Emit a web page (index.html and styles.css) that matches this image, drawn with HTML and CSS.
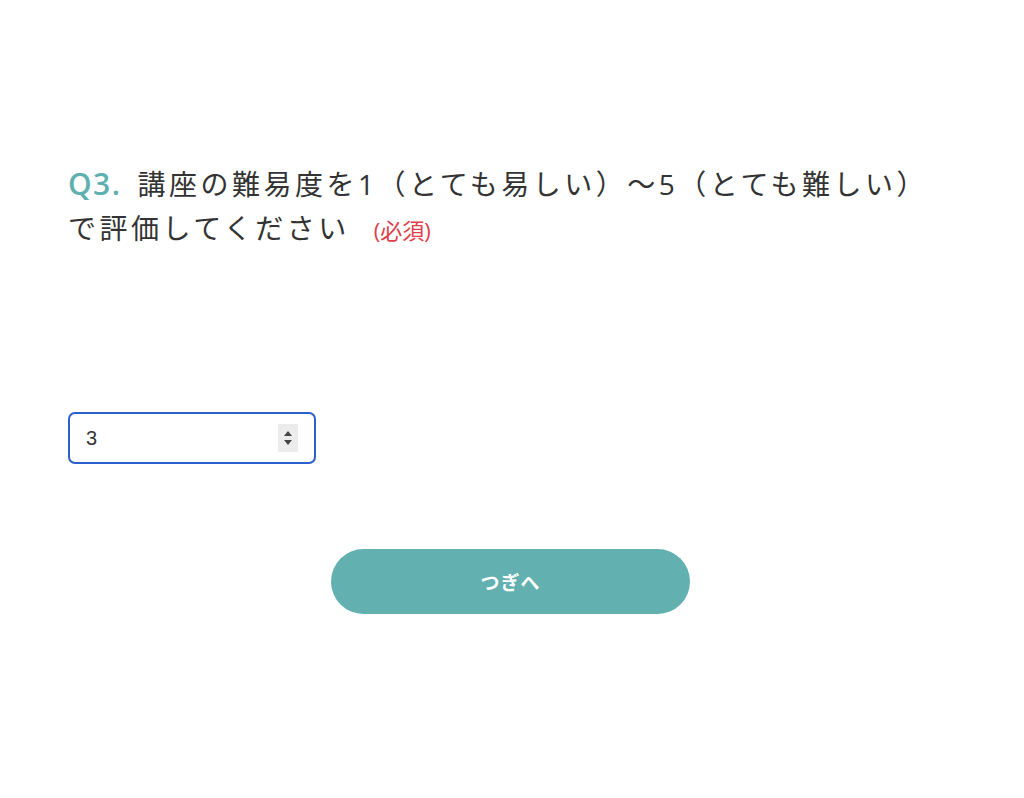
FILE: index.html
```html
<!DOCTYPE html>
<html lang="ja">
<head>
<meta charset="utf-8">
<link rel="stylesheet" href="styles.css">
</head>
<body>
<main class="page">
  <h2 class="question"><span class="qnum">Q3.</span><span class="qtext">講座の難易度を1（とても易しい）〜5（とても難しい）で評価してください</span><span class="req">(必須)</span></h2>
  <div class="field">
    <input class="num" type="number" value="3" autofocus>
    <span class="spin" aria-hidden="true">
      <svg width="20" height="28" viewBox="0 0 20 28"><rect width="20" height="28" fill="#ececec"/><path d="M6 12 L10 7 L14 12 Z" fill="#444"/><path d="M6 16 L10 21 L14 16 Z" fill="#444"/></svg>
    </span>
  </div>
  <div class="actions">
    <button class="next" type="button">つぎへ</button>
  </div>
</main>
</body>
</html>
```
FILE: styles.css
```css
html, body {
  margin: 0;
  padding: 0;
  background: #fff;
}
body {
  font-family: "Open Sans", "Noto Sans CJK JP", sans-serif;
  color: #333;
}
.page {
  width: 885px;
  margin-left: 68px;
  padding-top: 162px;
}
.question {
  margin: 0;
  max-width: 870px;
  font-size: 28px;
  font-weight: 400;
  line-height: 44px;
  letter-spacing: 3.5px;
  color: #333;
}
.qnum {
  color: #5fb0b0;
  font-weight: 600;
  font-size: 30px;
  letter-spacing: 1.5px;
  margin-right: 16px;
}
.req {
  color: #e0404c;
  font-size: 22px;
  letter-spacing: 0;
  margin-left: 24px;
}
.field {
  position: relative;
  width: 248px;
  margin-top: 160px;
}
.num {
  display: block;
  box-sizing: border-box;
  width: 248px;
  height: 52px;
  border: 2.5px solid #2a5fcc;
  border-radius: 7px;
  padding: 0 40px 0 16px;
  font-family: "Liberation Sans", sans-serif;
  font-size: 20px;
  color: #333;
  outline: none;
  -moz-appearance: textfield;
}
.num::-webkit-inner-spin-button,
.num::-webkit-outer-spin-button {
  -webkit-appearance: none;
  margin: 0;
}
.spin {
  position: absolute;
  right: 18px;
  top: 12px;
  display: block;
  width: 20px;
  height: 28px;
}
.spin svg {
  display: block;
}
.actions {
  display: flex;
  justify-content: center;
  margin-top: 85px;
}
.next {
  width: 359px;
  height: 65px;
  border: none;
  border-radius: 33px;
  background: #62b0b0;
  color: #fff;
  font-family: "Noto Sans CJK JP", sans-serif;
  font-weight: 700;
  font-size: 19px;
  letter-spacing: 0.05em;
}
```
